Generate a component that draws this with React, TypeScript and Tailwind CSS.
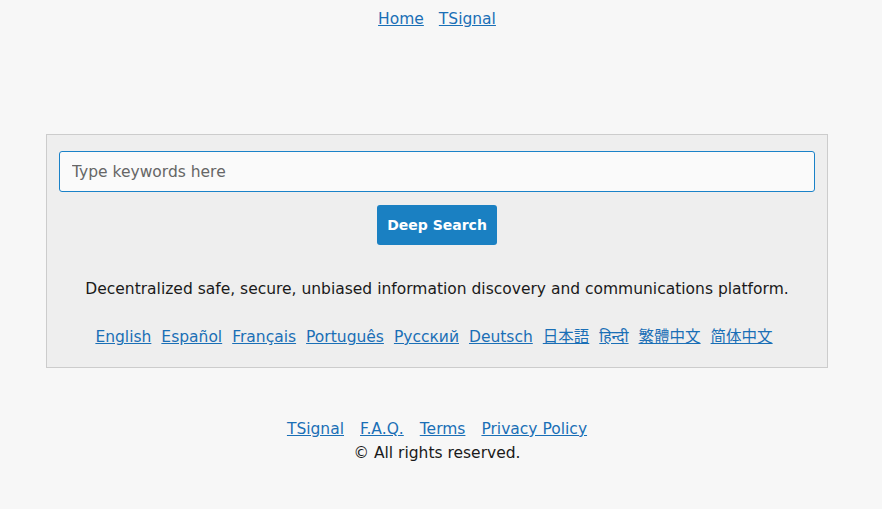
import React from "react";

const font = { fontFamily: '"DejaVu Sans", "Noto Sans CJK JP", "Noto Sans", sans-serif' };

const langs = ["English", "Español", "Français", "Português", "Русский", "Deutsch", "日本語", "हिन्दी", "繁體中文", "简体中文"];

export default function App() {
  return (
    <div className="min-h-[509px] w-full bg-[#f7f7f7] text-[#1a1a1a]" style={font}>
      <div className="w-[874px] flex flex-col items-center">
        <nav className="flex gap-[15px] pt-[9px] text-[15.5px] leading-[21px]">
          <a href="#" className="text-[#1a6fb6] underline">Home</a>
          <a href="#" className="text-[#1a6fb6] underline">TSignal</a>
        </nav>
        <div className="mt-[104px] w-[782px] h-[234px] border border-[#cccccc] bg-[#eeeeee] px-[12px] pt-[16px] flex flex-col items-center">
          <input
            type="text"
            placeholder="Type keywords here"
            className="w-full h-[41px] rounded-[3px] border border-[#1a82c8] bg-[#fafafa] px-[12px] text-[15.5px] placeholder:text-[#666666] outline-none"
          />
          <button className="mt-[13px] h-[40px] w-[120px] rounded-[3px] bg-[#1a80c2] text-white text-[14px] font-bold">
            Deep Search
          </button>
          <p className="mt-[33px] text-[15.5px] leading-[23px] text-[#1a1a1a]">
            Decentralized safe, secure, unbiased information discovery and communications platform.
          </p>
          <div className="mt-[25px] mr-[6px] flex gap-[10px] text-[15.5px] leading-[23px]">
            {langs.map((l) => (
              <a key={l} href="#" className="text-[#1a6fb6] underline">{l}</a>
            ))}
          </div>
        </div>
        <div className="mt-[49px] flex gap-[16px] text-[15.5px] leading-[24px]">
          <a href="#" className="text-[#1a6fb6] underline">TSignal</a>
          <a href="#" className="text-[#1a6fb6] underline">F.A.Q.</a>
          <a href="#" className="text-[#1a6fb6] underline">Terms</a>
          <a href="#" className="text-[#1a6fb6] underline">Privacy Policy</a>
        </div>
        <p className="text-[15.5px] leading-[24px]">© All rights reserved.</p>
      </div>
    </div>
  );
}
